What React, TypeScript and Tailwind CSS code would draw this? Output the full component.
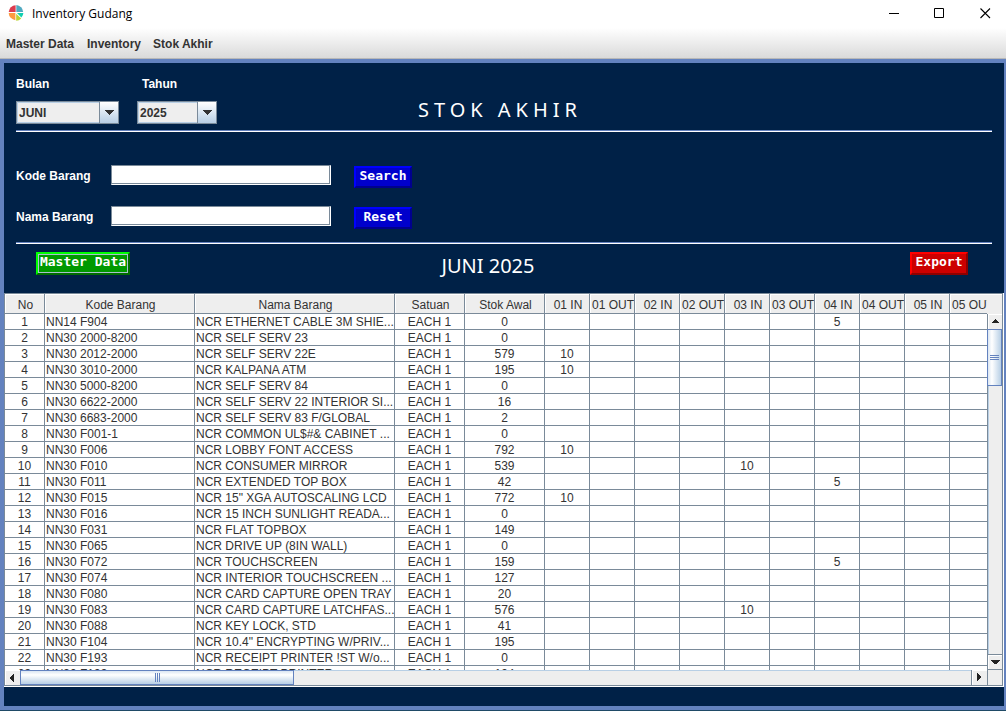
import React from "react";

type Row = { kode: string; nama: string; awal: string; moves?: Record<string, string> };

const days = ["01", "02", "03", "04", "05"];
const moveColumns = days.flatMap((d) => [`${d} IN`, `${d} OUT`]);

const rows: Row[] = [
  { kode: "NN14 F904", nama: "NCR ETHERNET CABLE 3M SHIE...", awal: "0", moves: { "04 IN": "5" } },
  { kode: "NN30 2000-8200", nama: "NCR SELF SERV 23", awal: "0" },
  { kode: "NN30 2012-2000", nama: "NCR SELF SERV 22E", awal: "579", moves: { "01 IN": "10" } },
  { kode: "NN30 3010-2000", nama: "NCR KALPANA ATM", awal: "195", moves: { "01 IN": "10" } },
  { kode: "NN30 5000-8200", nama: "NCR SELF SERV 84", awal: "0" },
  { kode: "NN30 6622-2000", nama: "NCR SELF SERV 22 INTERIOR SI...", awal: "16" },
  { kode: "NN30 6683-2000", nama: "NCR SELF SERV 83 F/GLOBAL", awal: "2" },
  { kode: "NN30 F001-1", nama: "NCR COMMON UL$#& CABINET ...", awal: "0" },
  { kode: "NN30 F006", nama: "NCR LOBBY FONT ACCESS", awal: "792", moves: { "01 IN": "10" } },
  { kode: "NN30 F010", nama: "NCR CONSUMER MIRROR", awal: "539", moves: { "03 IN": "10" } },
  { kode: "NN30 F011", nama: "NCR EXTENDED TOP BOX", awal: "42", moves: { "04 IN": "5" } },
  { kode: "NN30 F015", nama: 'NCR 15" XGA AUTOSCALING LCD', awal: "772", moves: { "01 IN": "10" } },
  { kode: "NN30 F016", nama: "NCR 15 INCH SUNLIGHT READA...", awal: "0" },
  { kode: "NN30 F031", nama: "NCR FLAT TOPBOX", awal: "149" },
  { kode: "NN30 F065", nama: "NCR DRIVE UP (8IN WALL)", awal: "0" },
  { kode: "NN30 F072", nama: "NCR TOUCHSCREEN", awal: "159", moves: { "04 IN": "5" } },
  { kode: "NN30 F074", nama: "NCR INTERIOR TOUCHSCREEN ...", awal: "127" },
  { kode: "NN30 F080", nama: "NCR CARD CAPTURE OPEN TRAY", awal: "20" },
  { kode: "NN30 F083", nama: "NCR CARD CAPTURE LATCHFAS...", awal: "576", moves: { "03 IN": "10" } },
  { kode: "NN30 F088", nama: "NCR KEY LOCK, STD", awal: "41" },
  { kode: "NN30 F104", nama: "NCR 10.4\" ENCRYPTING W/PRIV...", awal: "195" },
  { kode: "NN30 F193", nama: "NCR RECEIPT PRINTER !ST W/o...", awal: "0" },
  { kode: "NN30 F193", nama: "NCR RECEIPT PRINTER", awal: "194" },
];

function Logo() {
  return (
    <svg width="16" height="18" viewBox="0 0 16 18" aria-hidden="true">
      <path d="M7.6 7H0.7A7.4 7.4 0 0 1 7.6 0.2Z" fill="#dc3a4e" />
      <path d="M8.3 7V0A7.4 7.4 0 0 1 15.2 7Z" fill="#4fa9c0" />
      <path d="M7.4 8H0.7A7.4 7.4 0 0 0 7.4 15.2Z" fill="#fd9a3f" />
      <path d="M8.2 8.8L13.2 13.4A7.4 7.4 0 0 1 8.2 15.8Z" fill="#b9d533" />
      <path d="M9 8H15.4A7.2 7.2 0 0 1 13.4 12.4Z" fill="#10d0b0" />
    </svg>
  );
}

function Combo({ id, value, options, width }: { id: string; value: string; options: string[]; width: string }) {
  return (
    <div className={`relative h-[23px] ${width}`}>
      <select
        id={id}
        defaultValue={value}
        className="h-full w-full appearance-none border border-[#7a8a99] bg-[#eeeeee] pl-[2px] pr-5 text-[12px] font-bold text-[#333333] shadow-[inset_0_0_0_1px_#b8cfe5] outline-none"
      >
        {options.map((o) => (
          <option key={o}>{o}</option>
        ))}
      </select>
      <span className="pointer-events-none absolute inset-y-0 right-0 flex w-5 items-center justify-center border border-[#7a8a99] bg-linear-to-b from-white to-[#b8cfe5]">
        <svg width="10" height="5" viewBox="0 0 10 5" shapeRendering="crispEdges" aria-hidden="true">
          <path d="M0 0H10L5 5Z" fill="#333333" />
        </svg>
      </span>
    </div>
  );
}

function Separator() {
  return <div className="h-[2px] border-t border-b border-t-[#6382bf] border-b-white" />;
}

const bevel = "flex justify-center border-2 font-['DejaVu_Sans_Mono',monospace] text-[13px] leading-4 font-bold whitespace-nowrap text-white";
const blueButton = `${bevel} mt-px h-[22px] w-[58px] border-t-[#0000ff] border-l-[#0000ff] border-r-[#00008e] border-b-[#00008e] bg-[#0000cc]`;
const field = "h-5 w-full border border-t-[#7a8a99] border-l-[#7a8a99] border-r-white border-b-white bg-white px-1 text-[12px] text-[#333333] shadow-[inset_-1px_-1px_0_#7a8a99] outline-none";
const heading = "font-['Comic_Sans_MS','Noto_Sans',sans-serif] text-[20px] leading-7 text-white";
const th = "h-5 overflow-hidden border-r border-b border-[#7a8a99] bg-[#eeeeee] pt-[2px] pr-0 pb-0 pl-[2px] text-center leading-4 font-normal whitespace-nowrap shadow-[inset_1px_1px_0_white]";
const td = "h-4 overflow-hidden border-r border-b border-[#7a8a99] pt-[2px] pb-0 leading-[13px] whitespace-nowrap";

function StockTable() {
  return (
    <table className="w-[990px] table-fixed border-separate border-spacing-0 bg-white text-[12px] text-[#333333]">
      <colgroup>
        <col className="w-[40px]" />
        <col className="w-[150px]" />
        <col className="w-[200px]" />
        <col className="w-[70px]" />
        <col className="w-[80px]" />
        {moveColumns.map((c) => (
          <col key={c} className="w-[45px]" />
        ))}
      </colgroup>
      <thead>
        <tr>
          {["No", "Kode Barang", "Nama Barang", "Satuan", "Stok Awal", ...moveColumns].map((h) => (
            <th key={h} scope="col" className={th}>
              {h}
            </th>
          ))}
        </tr>
      </thead>
      <tbody>
        {rows.map((r, i) => (
          <tr key={i}>
            <td className={`${td} px-0 text-center`}>{i + 1}</td>
            <td className={`${td} pr-0 pl-px`}>{r.kode}</td>
            <td className={`${td} pr-0 pl-px`}>{r.nama}</td>
            <td className={`${td} px-0 text-center`}>EACH 1</td>
            <td className={`${td} px-0 text-center`}>{r.awal}</td>
            {moveColumns.map((c) => (
              <td key={c} className={`${td} px-0 text-center`}>
                {r.moves?.[c]}
              </td>
            ))}
          </tr>
        ))}
      </tbody>
    </table>
  );
}

function Arrow({ d }: { d: string }) {
  return (
    <svg width="9" height="9" viewBox="0 0 9 9" shapeRendering="crispEdges" aria-hidden="true">
      <path d={d} fill="#222222" />
    </svg>
  );
}

function VerticalBar() {
  return (
    <div className="flex w-[15px] flex-col border-l border-[#7a8a99] bg-[#eeeeee]">
      <button aria-label="Scroll up" className="flex h-[15px] shrink-0 items-center justify-center border-t border-l border-white">
        <Arrow d="M4 1H5V2H6V3H7V4H8V5H1V4H2V3H3V2H4Z" />
      </button>
      <div className="-ml-px flex h-[57px] flex-col items-center justify-center gap-px border border-[#6382bf] bg-linear-to-r from-[#dbe6f2] via-white via-30% to-[#b8cfe5]">
        <span className="h-px w-[9px] bg-[#6382bf]" />
        <span className="h-px w-[9px] bg-[#6382bf]" />
        <span className="h-px w-[9px] bg-[#6382bf]" />
      </div>
      <div className="flex-1 border-l border-[#b8cfe5]" />
      <button aria-label="Scroll down" className="flex h-4 shrink-0 items-center justify-center border-t border-b border-[#7a8a99] shadow-[inset_1px_1px_0_white]">
        <Arrow d="M0 2H9V3H8V4H7V5H6V6H3V5H2V4H1V3H0Z" />
      </button>
    </div>
  );
}

function HorizontalBar() {
  return (
    <div className="flex h-[15px] bg-[#eeeeee]">
      <button aria-label="Scroll left" className="flex w-[15px] shrink-0 items-center justify-center border-t border-l border-white">
        <Arrow d="M5 0V8H4V7H3V6H2V5H1V3H2V2H3V1H4V0Z" />
      </button>
      <div className="flex w-[274px] items-center justify-center gap-px border border-[#6382bf] bg-linear-to-b from-[#dbe6f2] via-white via-30% to-[#b8cfe5]">
        <span className="h-[9px] w-px bg-[#6382bf]" />
        <span className="h-[9px] w-px bg-[#6382bf]" />
        <span className="h-[9px] w-px bg-[#6382bf]" />
      </div>
      <div className="flex-1 border-t border-t-[#b8cfe5]" />
      <button aria-label="Scroll right" className="flex w-4 shrink-0 items-center justify-center border-l border-[#7a8a99] shadow-[inset_1px_1px_0_white]">
        <Arrow d="M2 0H3V1H4V2H5V3H6V5H5V6H4V7H3V8H2Z" />
      </button>
      <div className="w-[15px] border-l border-[#7a8a99]" />
    </div>
  );
}

export default function App() {
  return (
    <div className="flex h-screen flex-col border-b border-[#1f4a66] bg-white font-['Liberation_Sans',Arial,sans-serif] text-[12px] text-[#333333]">
      <header className="flex h-7 shrink-0 items-center justify-between pr-[15px] pl-2">
        <div className="flex items-center gap-2">
          <Logo />
          <h1 className="font-['Segoe_UI','Open_Sans',sans-serif] text-[12px] leading-4 text-black">Inventory Gudang</h1>
        </div>
        <div className="flex gap-[35px] text-black">
          <button aria-label="Minimize">
            <svg width="10" height="12" viewBox="0 0 10 12"><path d="M0 5.5H10" stroke="currentColor" /></svg>
          </button>
          <button aria-label="Maximize">
            <svg width="11" height="12" viewBox="0 0 11 12"><path d="M0.5 0.5H9.5V9.5H0.5Z" fill="none" stroke="currentColor" /></svg>
          </button>
          <button aria-label="Close">
            <svg width="11" height="12" viewBox="0 0 11 12"><path d="M0.5 0.5L10 10M10 0.5L0.5 10" stroke="currentColor" strokeWidth="1.1" /></svg>
          </button>
        </div>
      </header>

      <nav className="flex h-[31px] shrink-0 items-center gap-3 border-b border-[#b8b8b8] bg-linear-to-b from-white to-[#dadada] pt-[2px] pl-[6px] font-bold">
        <button>Master Data</button>
        <button className="pl-px">Inventory</button>
        <button>Stok Akhir</button>
      </nav>

      <main className="flex min-h-0 flex-1 flex-col border-t-4 border-r-2 border-b-4 border-l-4 border-[#6382bf] bg-[#002147] pb-[19px]">
        <div className="px-3">
          <section className="grid grid-cols-[1fr_auto_1fr] items-end pt-3 pb-[6px]">
            <div className="flex gap-[18px] font-bold text-white">
              <div className="flex flex-col gap-2">
                <label htmlFor="bulan" className="leading-[18px]">Bulan</label>
                <Combo id="bulan" value="JUNI" options={["MEI", "JUNI", "JULI"]} width="w-[103px]" />
              </div>
              <div className="flex flex-col gap-2">
                <label htmlFor="tahun" className="pl-[5px] leading-[18px]">Tahun</label>
                <Combo id="tahun" value="2025" options={["2024", "2025"]} width="w-[80px]" />
              </div>
            </div>
            <h2 className={`${heading} pr-2 tracking-[5px]`}>STOK AKHIR</h2>
          </section>
          <Separator />

          <form className="grid grid-cols-[95px_220px_auto] items-start justify-start gap-y-[18px] pt-[33px] pb-[13px]" onSubmit={(e) => e.preventDefault()}>
            <label htmlFor="kode" className="leading-[22px] font-bold text-white">Kode Barang</label>
            <input id="kode" type="text" className={field} />
            <div className="pl-[23px]">
              <button type="submit" className={blueButton}>Search</button>
            </div>
            <label htmlFor="nama" className="leading-[22px] font-bold text-white">Nama Barang</label>
            <input id="nama" type="text" className={field} />
            <div className="pl-[23px]">
              <button type="reset" className={blueButton}>Reset</button>
            </div>
          </form>
          <Separator />

          <section className="grid grid-cols-[1fr_auto_1fr] items-start pt-2 pr-6 pb-[13px] pl-5">
            <button className={`${bevel} h-[23px] w-[94px] justify-self-start border-t-[#00ff00] border-l-[#00ff00] border-r-[#006b00] border-b-[#006b00] bg-[#009900] shadow-[inset_0_0_0_1px_#a9bfd0]`}>
              Master Data
            </button>
            <h2 className={`${heading} pr-7`}>JUNI 2025</h2>
            <button className={`${bevel} h-[23px] w-[58px] justify-self-end border-t-[#ff0000] border-l-[#ff0000] border-r-[#8e0000] border-b-[#8e0000] bg-[#cc0000]`}>
              Export
            </button>
          </section>
        </div>

        <div className="flex min-h-0 flex-1 border-r border-b border-white">
          <div className="flex min-w-0 flex-1 flex-col border border-[#7a8a99]">
            <div className="flex min-h-0 flex-1">
              <div className="min-w-0 flex-1 overflow-hidden">
                <StockTable />
              </div>
              <div className="flex flex-col">
                <div className="h-5 shrink-0 border-t border-white bg-[#eeeeee]" />
                <div className="flex min-h-0 flex-1">
                  <VerticalBar />
                </div>
              </div>
            </div>
            <HorizontalBar />
          </div>
        </div>
      </main>
    </div>
  );
}
